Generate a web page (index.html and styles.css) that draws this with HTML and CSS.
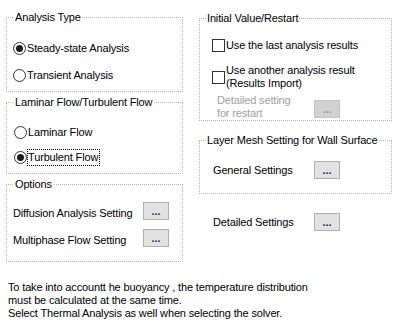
FILE: index.html
```html
<!DOCTYPE html>
<html>
<head>
<meta charset="utf-8">
<link rel="stylesheet" href="styles.css">
</head>
<body>
<div class="page">
  <div class="cols">
    <div class="col col-left">
      <fieldset class="grp grp-analysis">
        <legend>Analysis Type</legend>
        <div class="opt"><span class="radio on"></span><span>Steady-state Analysis</span></div>
        <div class="opt"><span class="radio"></span><span>Transient Analysis</span></div>
      </fieldset>
      <fieldset class="grp grp-flow">
        <legend>Laminar Flow/Turbulent Flow</legend>
        <div class="opt opt-flow"><span class="radio"></span><span>Laminar Flow</span></div>
        <div class="opt opt-flow"><span class="radio on"></span><span class="focus">Turbulent Flow</span></div>
      </fieldset>
      <fieldset class="grp grp-options">
        <legend>Options</legend>
        <div class="setrow"><span class="lbl">Diffusion Analysis Setting</span><span class="btn">...</span></div>
        <div class="setrow"><span class="lbl">Multiphase Flow Setting</span><span class="btn">...</span></div>
      </fieldset>
    </div>
    <div class="col col-right">
      <fieldset class="grp grp-init">
        <legend>Initial Value/Restart</legend>
        <div class="chkrow"><span class="check"></span><span>Use the last analysis results</span></div>
        <div class="chkrow chkrow-two"><span class="check"></span><span>Use another analysis result<br>(Results Import)</span></div>
        <div class="restart"><span class="lbl-dis">Detailed setting<br>for restart</span><span class="btn btn-dis">...</span></div>
      </fieldset>
      <fieldset class="grp grp-layer">
        <legend>Layer Mesh Setting for Wall Surface</legend>
        <div class="setrow setrow-right"><span class="lbl">General Settings</span><span class="btn">...</span></div>
      </fieldset>
      <div class="setrow setrow-right detailed"><span class="lbl">Detailed Settings</span><span class="btn">...</span></div>
    </div>
  </div>
  <p class="note">To take into accountt he buoyancy , the temperature distribution<br>must be calculated at the same time.<br>Select Thermal Analysis as well when selecting the solver.</p>
</div>
</body>
</html>
```

FILE: styles.css
```css
html, body {
  margin: 0;
  padding: 0;
  background: #ffffff;
}
body {
  font-family: "Liberation Sans", Arial, sans-serif;
  font-size: 11px;
  line-height: 13px;
  letter-spacing: -0.15px;
  color: #000000;
}
.page {
  padding: 11px 0 0 6px;
  width: 395px;
}
.cols {
  display: flex;
  gap: 16px;
  align-items: flex-start;
}
.col {
  display: flex;
  flex-direction: column;
}
.col-left {
  width: 177px;
  gap: 4px;
}
.col-right {
  width: 193px;
  padding-top: 1px;
}
.grp {
  margin: 0;
  border: 1px dotted #b4b4b4;
  padding: 0 0 0 6px;
  min-width: 0;
  display: flex;
  flex-direction: column;
}
.grp legend {
  padding: 0 1px;
  margin-left: 1px;
  line-height: 13px;
  white-space: nowrap;
}
.grp-analysis {
  padding-top: 14px;
  padding-bottom: 6px;
  gap: 7px;
}
.grp-flow {
  padding-top: 13px;
  padding-bottom: 6px;
  gap: 5px;
}
.grp-options {
  padding-top: 11px;
  padding-bottom: 14px;
  gap: 9px;
}
.opt {
  height: 20px;
  display: flex;
  align-items: center;
}
.opt-flow {
  padding-left: 1px;
}
.radio {
  border: 1px solid #333333;
  border-radius: 50%;
  box-sizing: border-box;
  width: 13px;
  height: 13px;
  margin-right: 1px;
  display: flex;
  align-items: center;
  justify-content: center;
  flex: none;
  background: #fff;
}
.radio.on::after {
  content: "";
  width: 7px;
  height: 7px;
  border-radius: 50%;
  background: #1e1e1e;
}
.focus {
  outline: 1px dotted #000;
  outline-offset: 0;
  padding: 1px 1px 1px 0;
}
.setrow {
  height: 18px;
  display: flex;
  align-items: center;
}
.grp-options .lbl {
  width: 130px;
  position: relative;
  top: 2px;
}
.btn {
  width: 26px;
  height: 18px;
  box-sizing: border-box;
  border: 1px solid #b0b0b0;
  background: #e2e2e2;
  color: #1a2a5a;
  font-weight: bold;
  font-size: 11px;
  line-height: 16px;
  text-align: center;
  letter-spacing: 0;
  flex: none;
}
.btn-dis {
  background: #d2d2d2;
  border-color: #c4c4c4;
  color: #9a9a9a;
  margin-top: 6px;
}
.grp-init {
  padding-left: 12px;
  padding-top: 13px;
  padding-bottom: 0;
}
.grp-init legend {
  margin-left: -6px;
}
.chkrow {
  display: flex;
  align-items: center;
  height: 14px;
}
.chkrow-two {
  height: 26px;
  margin-top: 12px;
}
.check {
  width: 13px;
  height: 13px;
  box-sizing: border-box;
  border: 1px solid #333333;
  background: #fff;
  margin-right: 1px;
  flex: none;
}
.restart {
  display: flex;
  align-items: flex-start;
  margin-top: 4px;
  padding-left: 5px;
  height: 26px;
}
.lbl-dis {
  color: #a0a0a0;
  width: 97px;
}
.grp-layer {
  margin-top: 13px;
  padding-left: 13px;
  padding-top: 14px;
  padding-bottom: 14px;
}
.grp-layer legend {
  margin-left: -7px;
}
.setrow-right .lbl {
  width: 101px;
}
.detailed {
  margin-top: 19px;
  padding-left: 14px;
}
.note {
  margin: 19px 0 0 2px;
  line-height: 13px;
}
```
